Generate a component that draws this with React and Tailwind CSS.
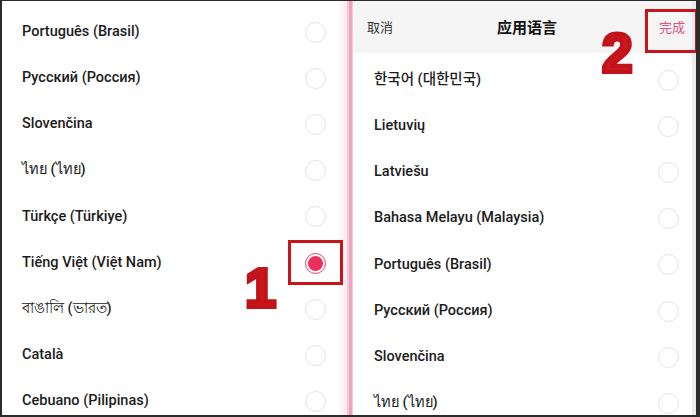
import React from "react";

const leftItems = [
  "Português (Brasil)",
  "Русский (Россия)",
  "Slovenčina",
  "ไทย (ไทย)",
  "Türkçe (Türkiye)",
  "Tiếng Việt (Việt Nam)",
  "বাঙালি (ভারত)",
  "Català",
  "Cebuano (Pilipinas)",
];

const rightItems = [
  "한국어 (대한민국)",
  "Lietuvių",
  "Latviešu",
  "Bahasa Melayu (Malaysia)",
  "Português (Brasil)",
  "Русский (Россия)",
  "Slovenčina",
  "ไทย (ไทย)",
];

function Radio({ selected }) {
  if (selected) {
    return (
      <div className="w-[21px] h-[21px] rounded-full border-[1.5px] border-[#e8426c] flex items-center justify-center shrink-0">
        <div className="w-[15px] h-[15px] rounded-full bg-[#ef2f5b]" />
      </div>
    );
  }
  return <div className="w-[21px] h-[21px] rounded-full border-[1.5px] border-[#e2e2e2] shrink-0" />;
}

function Row({ label, selected, padL, padR }) {
  return (
    <div className={`h-[46.2px] flex items-center justify-between shrink-0 ${padL} ${padR}`}>
      <span className="text-[14.5px] font-medium text-[#1c1c1c] leading-none">{label}</span>
      <Radio selected={selected} />
    </div>
  );
}

export default function App() {
  return (
    <div
      className="relative w-[700px] h-[417px] overflow-hidden bg-white border-l-2 border-t border-b-2 border-r-4 border-[#2b2b2b] flex"
      style={{ fontFamily: 'Roboto, "Noto Sans", "Noto Sans CJK KR", "Noto Sans CJK SC", sans-serif' }}
    >
      {/* Left panel */}
      <div className="w-[345px] h-full flex flex-col pt-[8px] overflow-hidden bg-gradient-to-r from-white from-[97%] to-[#fbeaf0]">
        {leftItems.map((l, i) => (
          <Row key={i} label={l} selected={i === 5} padL="pl-[20px]" padR="pr-[21px]" />
        ))}
      </div>

      {/* Divider */}
      <div className="w-[6px] h-full bg-[#f6c9d7] flex justify-center">
        <div className="w-[3px] h-full bg-[#eea4bd]" />
      </div>

      {/* Right panel */}
      <div className="w-[339px] h-full flex flex-col overflow-hidden bg-white">
        <div className="h-[52px] shrink-0 bg-[#f5f5f5] flex items-center justify-between pl-[14px] pr-[7px]">
          <span className="text-[13px] text-[#333] w-[40px]" style={{ fontFamily: '"Noto Sans CJK SC", sans-serif' }}>取消</span>
          <span className="text-[15px] font-bold text-[#111] ml-[2px]" style={{ fontFamily: '"Noto Sans CJK SC", sans-serif' }}>应用语言</span>
          <span className="text-[13px] text-[#e0507f] w-[40px] text-right" style={{ fontFamily: '"Noto Sans CJK SC", sans-serif' }}>完成</span>
        </div>
        <div className="flex flex-col pt-[4px]">
          {rightItems.map((l, i) => (
            <Row key={i} label={l} selected={false} padL="pl-[21px]" padR="pr-[13px]" />
          ))}
        </div>
      </div>
      <div className="w-[4px] h-full bg-[#ececec]" />

      {/* Annotations */}
      <div className="absolute left-[286px] top-[239px] w-[55px] h-[45px] border-[3px] border-[#c8141b]" />
      <div className="absolute left-[643px] top-[8px] w-[53px] h-[44px] border-[3px] border-[#c8141b]" />
      <span
        className="absolute left-[243px] top-[259px] text-[56px] leading-none font-bold text-[#cc161c] [-webkit-text-stroke:4px_#c0141a]"
        style={{ fontFamily: '"Liberation Sans", Arial, sans-serif' }}
      >
        1
      </span>
      <span
        className="absolute left-[600px] top-[25px] text-[55px] leading-none font-bold text-[#cc161c] [-webkit-text-stroke:4px_#c0141a]"
        style={{ fontFamily: '"Liberation Sans", Arial, sans-serif' }}
      >
        2
      </span>
    </div>
  );
}
